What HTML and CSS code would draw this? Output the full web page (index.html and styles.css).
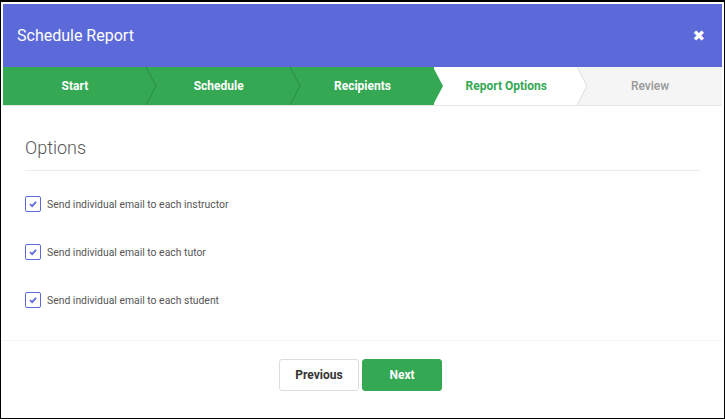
FILE: index.html
```html
<!DOCTYPE html>
<html>
<head>
  <title>Schedule Report</title>
  <link rel="stylesheet" href="styles.css">
</head>
<body>
  <div class="frame">
    <div class="modal">
      <!-- Header -->
      <div class="modal-header">
        <h1>Schedule Report</h1>
        <span class="close">&#10006;</span>
      </div>

      <!-- Wizard steps -->
      <div class="steps">
        <div class="step done">Start
          <svg class="arrow" viewBox="0 0 11 38"><polygon points="0,0 10,19 0,38" fill="#34a853"/><polyline points="0,0 10,19 0,38" fill="none" stroke="#2b8c45" stroke-width="1"/></svg>
        </div>
        <div class="step done">Schedule
          <svg class="arrow" viewBox="0 0 11 38"><polygon points="0,0 10,19 0,38" fill="#34a853"/><polyline points="0,0 10,19 0,38" fill="none" stroke="#2b8c45" stroke-width="1"/></svg>
        </div>
        <div class="step done">Recipients
          <svg class="arrow" viewBox="0 0 11 38"><polygon points="0,0 10,19 0,38" fill="#34a853"/></svg>
        </div>
        <div class="step current">Report Options
          <svg class="arrow" viewBox="0 0 11 38"><polygon points="0,0 10,19 0,38" fill="#fff"/><polyline points="0,0 10,19 0,38" fill="none" stroke="#dddddd" stroke-width="1"/></svg>
        </div>
        <div class="step todo">Review</div>
      </div>

      <!-- Options -->
      <div class="modal-body">
        <h2>Options</h2>
        <div class="option">
          <span class="checkbox"><svg viewBox="0 0 16 16"><polyline points="4.5,8 7,10.5 11.5,5.5" fill="none" stroke="#5b69d9" stroke-width="2"/></svg></span>
          <span>Send individual email to each instructor</span>
        </div>
        <div class="option">
          <span class="checkbox"><svg viewBox="0 0 16 16"><polyline points="4.5,8 7,10.5 11.5,5.5" fill="none" stroke="#5b69d9" stroke-width="2"/></svg></span>
          <span>Send individual email to each tutor</span>
        </div>
        <div class="option">
          <span class="checkbox"><svg viewBox="0 0 16 16"><polyline points="4.5,8 7,10.5 11.5,5.5" fill="none" stroke="#5b69d9" stroke-width="2"/></svg></span>
          <span>Send individual email to each student</span>
        </div>
      </div>

      <!-- Footer -->
      <div class="modal-footer">
        <button class="btn btn-default">Previous</button>
        <button class="btn btn-primary">Next</button>
      </div>
    </div>
  </div>
</body>
</html>
```

FILE: styles.css
```css
body {
  margin: 0;
  font-family: Roboto, "Liberation Sans", Arial, sans-serif;
}

.frame {
  width: 725px;
  height: 419px;
  box-sizing: border-box;
  border: 1px solid #000;
  border-top-width: 2px;
  padding: 2px;
  background-color: #fff;
}

.modal {
  height: 100%;
  display: flex;
  flex-direction: column;
}

.modal-header {
  height: 63px;
  background-color: #5b69d9;
  display: flex;
  align-items: center;
  justify-content: space-between;
  padding: 0 17px 0 14px;
}

.modal-header h1 {
  margin: 0;
  color: #fff;
  font-size: 16px;
  font-weight: 400;
}

.close {
  color: #fff;
  font-size: 15px;
  font-weight: bold;
  font-family: "DejaVu Sans", sans-serif;
}

.steps {
  display: flex;
  height: 38px;
  border-bottom: 1px solid #e6e6e6;
}

.step {
  flex: 1;
  position: relative;
  display: flex;
  align-items: center;
  justify-content: center;
  font-size: 12px;
  font-weight: bold;
}

.step.done {
  background-color: #34a853;
  color: #fff;
}

.step.current {
  background-color: #fff;
  color: #34a853;
}

.step.todo {
  background-color: #f5f5f5;
  color: #999;
  font-weight: 500;
}

.step .arrow {
  position: absolute;
  top: 0;
  left: 100%;
  width: 11px;
  height: 38px;
  margin-left: -1px;
  z-index: 1;
}

.modal-body {
  padding: 31px 22px 0 22px;
  height: 203px;
  border-bottom: 1px solid #f4f4f4;
}

.modal-body h2 {
  margin: 0 0 25px 0;
  padding-bottom: 12px;
  border-bottom: 1px solid #ebebeb;
  font-size: 18px;
  font-weight: 300;
  color: #555;
}

.option {
  display: flex;
  align-items: center;
  gap: 6px;
  font-size: 10.4px;
  color: #555;
  margin-bottom: 32px;
}

.checkbox {
  width: 14px;
  height: 14px;
  border: 1px solid #5b69d9;
  border-radius: 2px;
  display: inline-block;
}

.checkbox svg {
  display: block;
  width: 14px;
  height: 14px;
}

.modal-footer {
  display: flex;
  justify-content: center;
  gap: 3px;
  padding: 18px 4px 0 0;
}

.btn {
  width: 80px;
  height: 32px;
  border-radius: 3px;
  font-family: Roboto, "Liberation Sans", Arial, sans-serif;
  font-size: 12px;
  font-weight: bold;
  cursor: pointer;
}

.btn-default {
  background-color: #fff;
  border: 1px solid #ddd;
  color: #333;
}

.btn-primary {
  background-color: #34a853;
  border: 1px solid #34a853;
  color: #fff;
}
```
